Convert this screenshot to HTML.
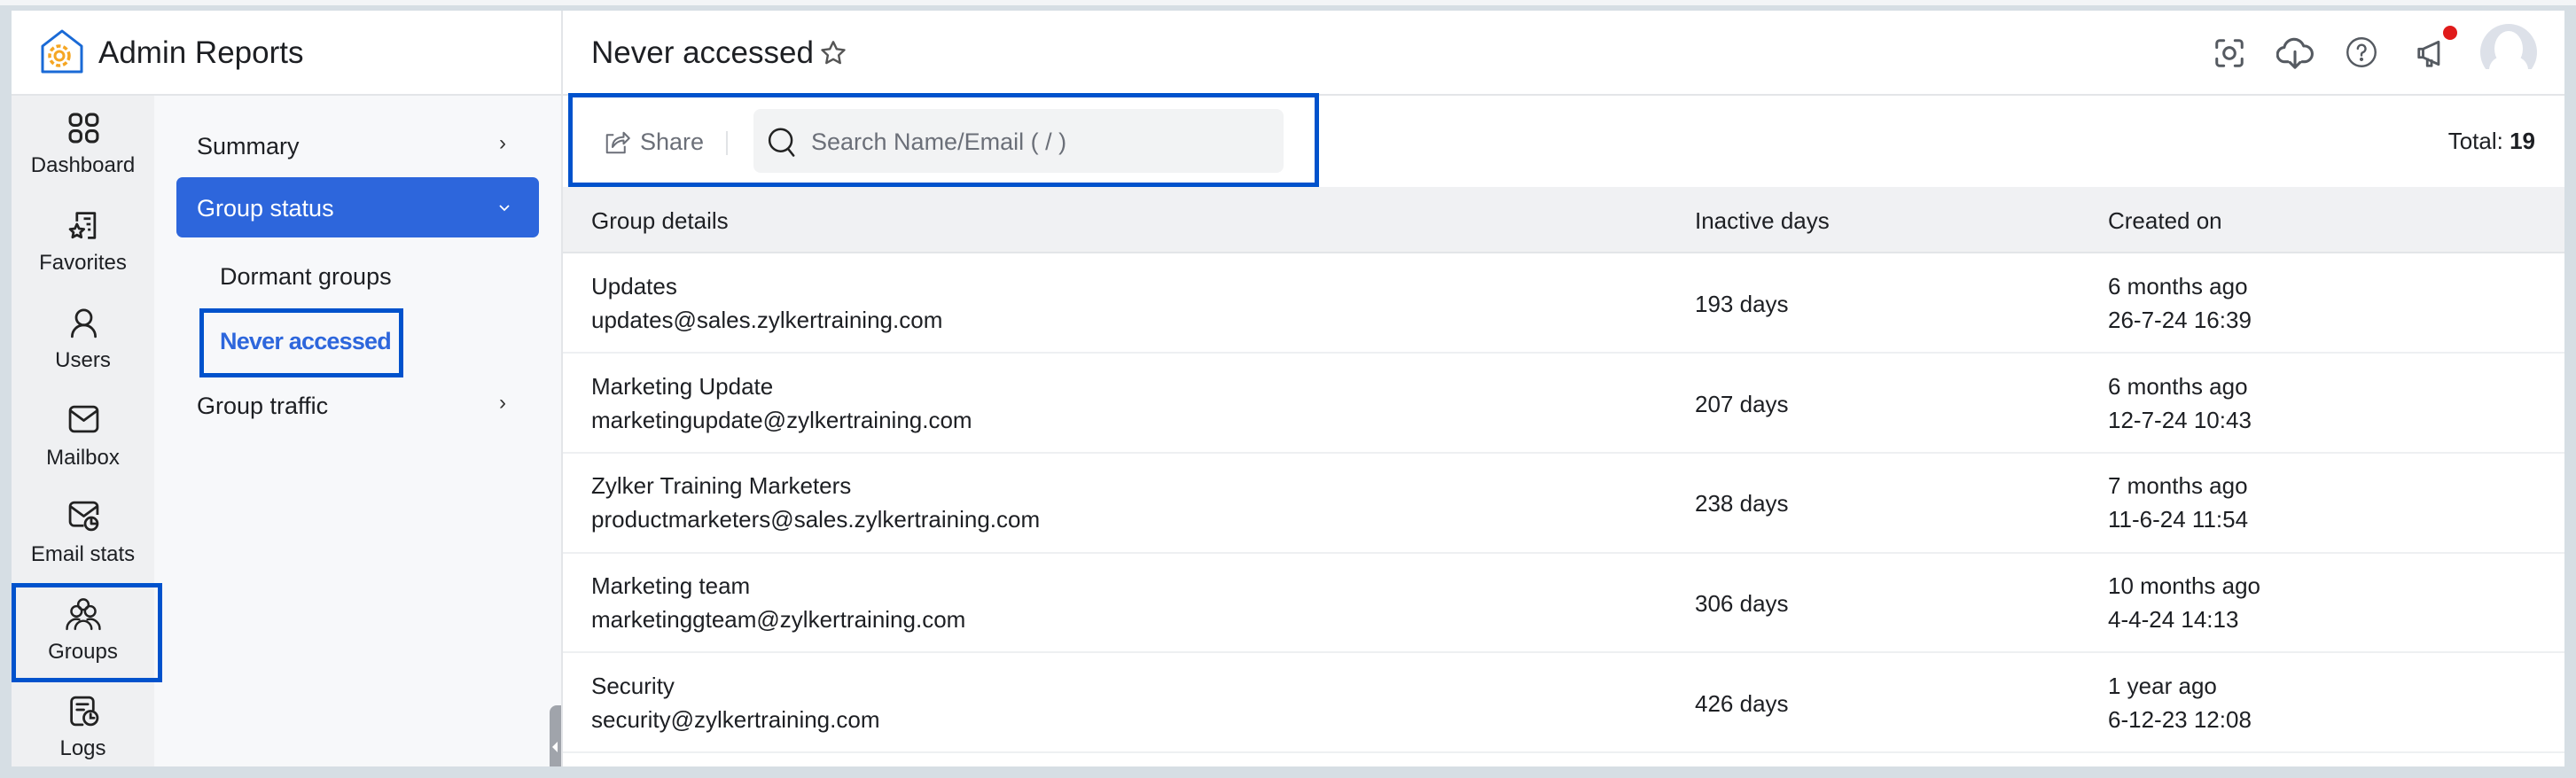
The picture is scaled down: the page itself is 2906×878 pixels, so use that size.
<!DOCTYPE html>
<html><head><meta charset="utf-8"><style>
*{margin:0;padding:0;box-sizing:border-box}
body{width:2906px;height:878px;overflow:hidden;background:#d6dee4;font-family:"Liberation Sans",sans-serif;color:#1d1f23;position:relative}
.a{position:absolute;line-height:1;white-space:nowrap}
.rl{position:absolute;left:13px;width:161px;text-align:center;font-size:24px;line-height:1}
.sm{font-size:27px}
.r{font-size:26px}
svg{position:absolute}
</style></head><body>
<div class="a" style="left:0;top:0;width:2906px;height:6px;background:#f3f5f7"></div>
<div class="a" style="left:13px;top:12px;width:2880px;height:853px;background:#fff"></div>
<!-- header -->
<div class="a" style="left:13px;top:106px;width:2880px;height:2px;background:#e3e5e8"></div>
<div class="a" style="left:633px;top:12px;width:2px;height:853px;background:#e3e5e8"></div>
<svg style="left:45px;top:32px" width="50" height="52" viewBox="0 0 50 52"><path d="M3 20 L25 3 L47 20 V49 H3 Z" fill="none" stroke="#1a6ad6" stroke-width="3" stroke-linejoin="round"/><circle cx="22" cy="31" r="11" fill="none" stroke="#f5a623" stroke-width="3.5" stroke-dasharray="5 3"/><circle cx="22" cy="31" r="5" fill="none" stroke="#f5a623" stroke-width="3"/></svg>
<div class="a" style="left:111px;top:42px;font-size:35px">Admin Reports</div>
<div class="a" style="left:667px;top:42px;font-size:35px">Never accessed</div>
<svg style="left:924px;top:44px" width="32" height="32" viewBox="0 0 24 24"><path d="M12 2.5l2.9 6 6.5.8-4.8 4.5 1.2 6.5L12 17.1l-5.8 3.2 1.2-6.5L2.6 9.3l6.5-.8z" fill="none" stroke="#555" stroke-width="1.8" stroke-linejoin="round"/></svg>
<!-- top right icons -->
<svg style="left:2496px;top:41px" width="38" height="38" viewBox="0 0 24 24" fill="none" stroke="#555a61" stroke-width="1.9" stroke-linecap="round"><path d="M3 8V5a2 2 0 0 1 2-2h3M16 3h3a2 2 0 0 1 2 2v3M21 16v3a2 2 0 0 1-2 2h-3M8 21H5a2 2 0 0 1-2-2v-3"/><circle cx="12" cy="12" r="4"/></svg>
<svg style="left:2568px;top:40px" width="42" height="40" viewBox="0 0 26 24" fill="none" stroke="#555a61" stroke-width="1.9" stroke-linecap="round" stroke-linejoin="round"><path d="M8 18H6a5 5 0 0 1-.5-10A7 7 0 0 1 19 7a5 5 0 0 1 1 11h-2"/><path d="M13 11v11M9.5 18.5L13 22l3.5-3.5"/></svg>
<svg style="left:2646px;top:41px" width="36" height="36" viewBox="0 0 24 24" fill="none" stroke="#555a61" stroke-width="1.6"><circle cx="12" cy="12" r="10.5"/><path d="M9.2 9.3a2.9 2.9 0 1 1 3.8 2.8c-.7.3-1 .8-1 1.5v.8" stroke-linecap="round"/><circle cx="12" cy="17.3" r=".6" fill="#555a61"/></svg>
<svg style="left:2724px;top:41px" width="38" height="38" viewBox="0 0 24 24" fill="none" stroke="#555a61" stroke-width="1.8" stroke-linejoin="round"><path d="M3 9h3l11-5v16L6 15H3z"/><path d="M6 9v6M9 15.5V21h3v-4.5"/></svg>
<div class="a" style="left:2756px;top:29px;width:16px;height:16px;border-radius:50%;background:#e01b1b"></div>
<div class="a" style="left:2798px;top:27px;width:64px;height:64px;border-radius:50%;background:#dde1e9;overflow:hidden;clip-path:inset(0 0 13px 0)">
<div class="a" style="left:16px;top:8px;width:32px;height:40px;border-radius:50%;background:#fff"></div>
<div class="a" style="left:10px;top:36px;width:44px;height:40px;border-radius:40%;background:#fff"></div></div>
<!-- rail -->
<div class="a" style="left:13px;top:108px;width:161px;height:757px;background:#eff0f2"></div>
<div class="a" style="left:174px;top:108px;width:459px;height:757px;background:#f7f8fa"></div>
<svg style="left:76px;top:126px" width="37" height="37" viewBox="0 0 24 24" fill="none" stroke="#222" stroke-width="2"><rect x="2" y="2" width="8" height="8" rx="3"/><rect x="14" y="2" width="8" height="8" rx="3"/><rect x="2" y="14" width="8" height="8" rx="3"/><rect x="14" y="14" width="8" height="8" rx="3"/></svg>
<div class="rl" style="top:175px">Dashboard</div>
<svg style="left:76px;top:236px" width="37" height="37" viewBox="0 0 24 24" fill="none" stroke="#222" stroke-width="1.8" stroke-linejoin="round"><path d="M7 9V3h13v18h-5"/><path d="M12 7h5M14 11h3M15 15h2"/><path d="M7 11l1.6 3.3 3.5.4-2.6 2.4.7 3.5L7 18.9l-3.2 1.7.7-3.5L2 14.7l3.5-.4z"/></svg>
<div class="rl" style="top:285px">Favorites</div>
<svg style="left:76px;top:346px" width="37" height="37" viewBox="0 0 24 24" fill="none" stroke="#222" stroke-width="1.8" stroke-linecap="round"><circle cx="12" cy="8" r="5.5"/><path d="M3.5 22a8.5 8.5 0 0 1 17 0"/></svg>
<div class="rl" style="top:395px">Users</div>
<svg style="left:76px;top:456px" width="37" height="34" viewBox="0 0 24 22" fill="none" stroke="#222" stroke-width="1.8" stroke-linejoin="round"><rect x="2" y="2" width="20" height="18" rx="3"/><path d="M2.5 5l9.5 7 9.5-7"/></svg>
<div class="rl" style="top:505px">Mailbox</div>
<svg style="left:76px;top:564px" width="37" height="37" viewBox="0 0 24 24" fill="none" stroke="#222" stroke-width="1.8" stroke-linejoin="round"><path d="M12 19H5a3 3 0 0 1-3-3V5a3 3 0 0 1 3-3h14a3 3 0 0 1 3 3v6"/><path d="M2.5 5l9.5 7 9.5-7"/><circle cx="17.5" cy="17.5" r="4.5"/><path d="M17.5 13v4.5h4.5"/></svg>
<div class="rl" style="top:614px">Email stats</div>
<div class="a" style="left:13px;top:658px;width:170px;height:112px;border:5px solid #0052cc"></div>
<svg style="left:74px;top:674px" width="40" height="38" viewBox="0 0 26 24" fill="none" stroke="#222" stroke-width="1.6" stroke-linecap="round"><circle cx="13" cy="5" r="3.8"/><circle cx="8" cy="10" r="3.8"/><circle cx="18" cy="10" r="3.8"/><path d="M1 23a7 7 0 0 1 9-7M25 23a7 7 0 0 0-9-7M7 23a6 6 0 0 1 12 0"/></svg>
<div class="rl" style="top:724px">Groups</div>
<svg style="left:76px;top:784px" width="37" height="37" viewBox="0 0 24 24" fill="none" stroke="#222" stroke-width="1.8" stroke-linecap="round"><path d="M11 22H6a3 3 0 0 1-3-3V5a3 3 0 0 1 3-3h10a3 3 0 0 1 3 3v6"/><path d="M7 7h8M7 11h5"/><circle cx="17" cy="17" r="5"/><path d="M17 14v3h2.5"/></svg>
<div class="rl" style="top:833px">Logs</div>
<!-- submenu -->
<div class="a sm" style="left:222px;top:152px">Summary</div>
<div class="a" style="left:563px;top:150px;font-size:24px;color:#333">›</div>
<div class="a" style="left:199px;top:200px;width:409px;height:68px;border-radius:7px;background:#2d66dc"></div>
<div class="a sm" style="left:222px;top:222px;color:#fff">Group status</div>
<svg style="left:562px;top:230px" width="14" height="10" viewBox="0 0 14 10"><path d="M2 2l5 5 5-5" fill="none" stroke="#fff" stroke-width="1.8"/></svg>
<div class="a sm" style="left:248px;top:299px">Dormant groups</div>
<div class="a" style="left:225px;top:348px;width:230px;height:78px;border:5px solid #0052cc"></div>
<div class="a sm" style="left:248px;top:372px;color:#2d66dc;font-weight:bold;letter-spacing:-0.8px">Never accessed</div>
<div class="a sm" style="left:222px;top:445px">Group traffic</div>
<div class="a" style="left:563px;top:443px;font-size:24px;color:#333">›</div>
<div class="a" style="left:620px;top:796px;width:13px;height:69px;background:#a0a4ab;border-radius:8px 0 0 0"></div>
<svg style="left:622px;top:836px" width="8" height="14" viewBox="0 0 8 14"><path d="M7 1L1 7l6 6z" fill="#fff"/></svg>
<!-- toolbar -->
<div class="a" style="left:641px;top:105px;width:847px;height:106px;border:5px solid #0052cc"></div>
<svg style="left:681px;top:146px" width="30" height="30" viewBox="0 0 24 24" fill="none" stroke="#6b6f78" stroke-width="1.6" stroke-linejoin="round"><path d="M9 5H3v16h16v-6"/><path d="M8 16c0-6 4-9 10-9V3l5 5-5 5V10c-4 0-7 2-10 6z"/></svg>
<div class="a sm" style="left:722px;top:147px;color:#6b6f78">Share</div>
<div class="a" style="left:819px;top:148px;width:2px;height:27px;background:#e1e3e6"></div>
<div class="a" style="left:850px;top:123px;width:598px;height:72px;border-radius:8px;background:#f2f3f4"></div>
<svg style="left:865px;top:143px" width="34" height="36" viewBox="0 0 24 26" fill="none" stroke="#222" stroke-width="1.8" stroke-linecap="round"><circle cx="11" cy="11" r="9"/><path d="M17.5 18.5l4 5"/></svg>
<div class="a sm" style="left:915px;top:147px;color:#6b6f78">Search Name/Email ( / )</div>
<div class="a r" style="right:46px;top:146px">Total: <b>19</b></div>
<!-- table -->
<div class="a" style="left:635px;top:211px;width:2258px;height:74px;background:#f0f1f3"></div>
<div class="a" style="left:635px;top:284px;width:2258px;height:2px;background:#e3e5e8"></div>
<div class="a r" style="left:667px;top:236px">Group details</div>
<div class="a r" style="left:1912px;top:236px">Inactive days</div>
<div class="a r" style="left:2378px;top:236px">Created on</div>

<div class="a r" style="left:667px;top:310px">Updates</div>
<div class="a r" style="left:667px;top:348px">updates@sales.zylkertraining.com</div>
<div class="a r" style="left:1912px;top:330px">193 days</div>
<div class="a r" style="left:2378px;top:310px">6 months ago</div>
<div class="a r" style="left:2378px;top:348px">26-7-24 16:39</div>
<div class="a" style="left:635px;top:397px;width:2258px;height:2px;background:#eef0f2"></div>

<div class="a r" style="left:667px;top:423px">Marketing Update</div>
<div class="a r" style="left:667px;top:461px">marketingupdate@zylkertraining.com</div>
<div class="a r" style="left:1912px;top:443px">207 days</div>
<div class="a r" style="left:2378px;top:423px">6 months ago</div>
<div class="a r" style="left:2378px;top:461px">12-7-24 10:43</div>
<div class="a" style="left:635px;top:510px;width:2258px;height:2px;background:#eef0f2"></div>

<div class="a r" style="left:667px;top:535px">Zylker Training Marketers</div>
<div class="a r" style="left:667px;top:573px">productmarketers@sales.zylkertraining.com</div>
<div class="a r" style="left:1912px;top:555px">238 days</div>
<div class="a r" style="left:2378px;top:535px">7 months ago</div>
<div class="a r" style="left:2378px;top:573px">11-6-24 11:54</div>
<div class="a" style="left:635px;top:623px;width:2258px;height:2px;background:#eef0f2"></div>

<div class="a r" style="left:667px;top:648px">Marketing team</div>
<div class="a r" style="left:667px;top:686px">marketinggteam@zylkertraining.com</div>
<div class="a r" style="left:1912px;top:668px">306 days</div>
<div class="a r" style="left:2378px;top:648px">10 months ago</div>
<div class="a r" style="left:2378px;top:686px">4-4-24 14:13</div>
<div class="a" style="left:635px;top:735px;width:2258px;height:2px;background:#eef0f2"></div>

<div class="a r" style="left:667px;top:761px">Security</div>
<div class="a r" style="left:667px;top:799px">security@zylkertraining.com</div>
<div class="a r" style="left:1912px;top:781px">426 days</div>
<div class="a r" style="left:2378px;top:761px">1 year ago</div>
<div class="a r" style="left:2378px;top:799px">6-12-23 12:08</div>
<div class="a" style="left:635px;top:848px;width:2258px;height:2px;background:#eef0f2"></div>
</body></html>
